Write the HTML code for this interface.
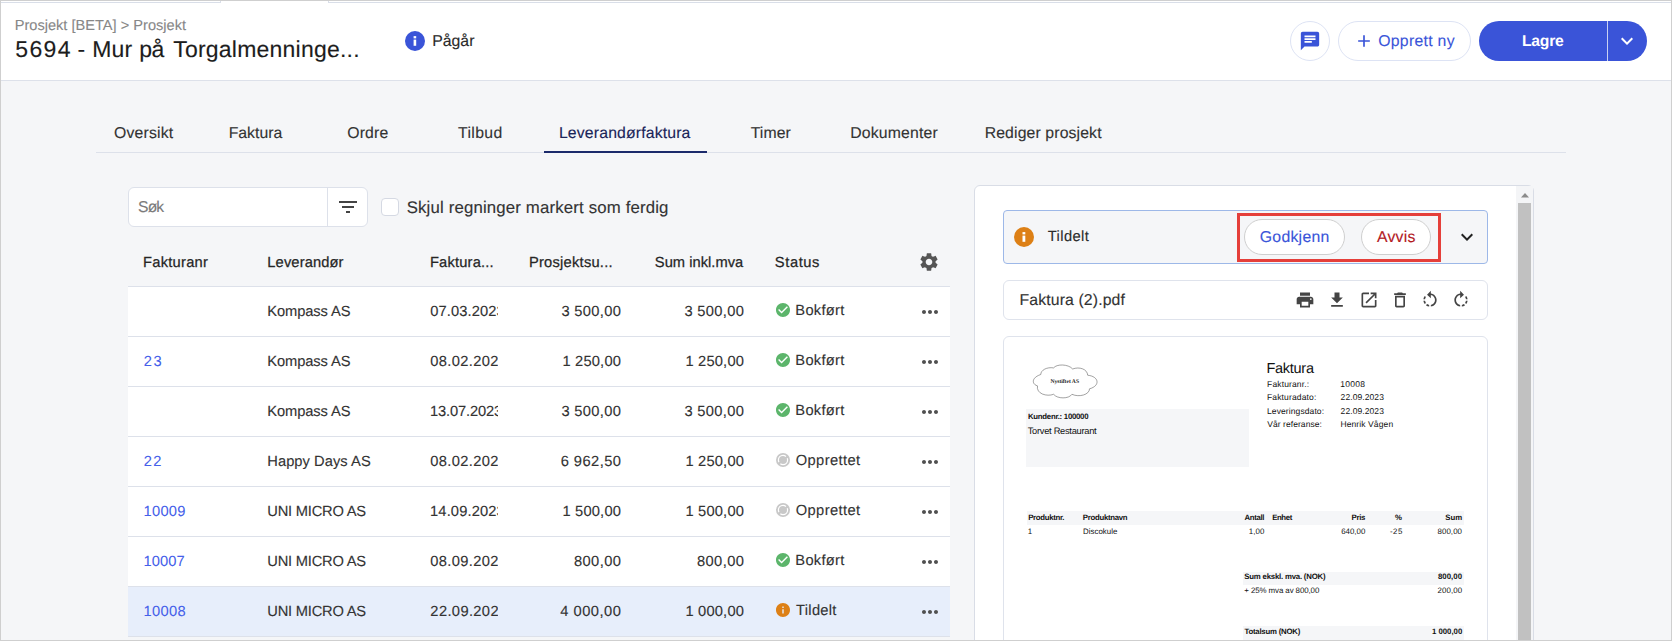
<!DOCTYPE html>
<html lang="nb"><head><meta charset="utf-8"><title>Prosjekt</title>
<style>
*{box-sizing:border-box;margin:0;padding:0}
html,body{width:1672px;height:641px;overflow:hidden;background:#f5f6f8}
body{position:relative;font-family:"Liberation Sans",sans-serif}
.a{position:absolute}
.t{position:absolute;white-space:nowrap;display:block;text-rendering:geometricPrecision}
svg{position:absolute;display:block;overflow:visible}
.hdr{left:0;top:0;width:1672px;height:81px;background:#fff;border-bottom:1px solid #dde1ea}
.frame{left:0;top:0;width:1672px;height:641px;border:1px solid #cfcfcf;z-index:50;pointer-events:none}
.ln{background:#d9dee8}
.pill{border:1px solid #dde3f4;background:#fff;border-radius:21px}
.row{left:128px;width:822px;height:50px;background:#fff;border-bottom:1px solid #dde1ea}
.panel{left:974px;top:185px;width:560px;height:470px;background:#fff;border:1px solid #d9dde6;border-radius:6px}
.band{background:#f5f6f8}

</style></head><body>
<div class="a hdr"></div>
<!-- top tab-strip remnants -->
<div class="a ln" style="left:1px;top:2px;width:220px;height:1px"></div>
<div class="a ln" style="left:220px;top:1px;width:1px;height:2px"></div>
<div class="a ln" style="left:328px;top:1px;width:1px;height:2px"></div>
<div class="a ln" style="left:328px;top:2px;width:1343px;height:1px"></div>

<!-- status: Pågår -->
<svg style="left:405px;top:31px" width="20" height="20" viewBox="0 0 20 20"><circle cx="10" cy="10" r="10" fill="#3a54d8"/><rect x="8.600" y="8.600" width="2.600" height="6.200" fill="#fff"/><rect x="8.600" y="5.100" width="2.600" height="2.300" fill="#fff"/></svg>

<!-- header buttons -->
<div class="a pill" style="left:1290px;top:21px;width:40px;height:40px;border-radius:20px"></div>
<svg style="left:1299px;top:30px" width="22" height="22" viewBox="0 0 24 24"><path fill="#3a54d8" d="M20 2H4c-1.1 0-1.99.9-1.99 2L2 22l4-4h14c1.1 0 2-.9 2-2V4c0-1.1-.9-2-2-2zM6 9h12v2H6V9zm8 5H6v-2h8v2zm4-6H6V6h12v2z"/></svg>
<div class="a pill" style="left:1338px;top:21px;width:133px;height:40px"></div>
<svg style="left:1354px;top:31px" width="20" height="20" viewBox="0 0 24 24"><path fill="#3a54d8" d="M19 13h-6v6h-2v-6H5v-2h6V5h2v6h6v2z"/></svg>
<div class="a" style="left:1479px;top:21px;width:168px;height:40px;border-radius:20px;background:#3a54d8"></div>
<div class="a" style="left:1607px;top:21px;width:1px;height:40px;background:#c9d1f3"></div>
<svg style="left:1615px;top:29px" width="24" height="24" viewBox="0 0 24 24"><path fill="#fff" d="M16.59 8.59L12 13.17 7.41 8.59 6 10l6 6 6-6z"/></svg>

<!-- tabs -->
<div class="a" style="left:96px;top:152px;width:1470px;height:1px;background:#dde1ea"></div>
<div class="a" style="left:544px;top:150.5px;width:163px;height:2.5px;background:#1b2a6b"></div>

<!-- search -->
<div class="a" style="left:128px;top:187px;width:240px;height:40px;background:#fff;border:1px solid #dde1ea;border-radius:6px"></div>
<div class="a" style="left:327px;top:188px;width:1px;height:38px;background:#dde1ea"></div>
<svg style="left:336px;top:195px" width="24" height="24" viewBox="0 0 24 24"><path fill="#444" d="M10 18h4v-2h-4v2zM3 6v2h18V6H3zm3 7h12v-2H6v2z"/></svg>
<div class="a" style="left:381px;top:198px;width:18px;height:18px;background:#fff;border:1px solid #d5d9e3;border-radius:4px"></div>

<!-- table -->
<div class="a" style="left:128px;top:286px;width:822px;height:1px;background:#dde1ea"></div>
<div class="a row" style="top:287px"></div>
<div class="a row" style="top:337px"></div>
<div class="a row" style="top:387px"></div>
<div class="a row" style="top:437px"></div>
<div class="a row" style="top:487px"></div>
<div class="a row" style="top:537px"></div>
<div class="a row" style="top:587px;background:#e7eefb"></div>
<svg style="left:918px;top:251px" width="22" height="22" viewBox="0 0 24 24"><path fill="#555" d="M19.14 12.94c.04-.3.06-.61.06-.94 0-.32-.02-.64-.07-.94l2.03-1.58c.18-.14.23-.41.12-.61l-1.920-3.320c-.12-.22-.37-.29-.59-.22l-2.39.96c-.5-.38-1.030-.7-1.620-.94l-.36-2.540c-.04-.24-.24-.41-.48-.41h-3.840c-.24 0-.43.17-.47.41l-.36 2.540c-.59.24-1.130.57-1.620.94l-2.390-.96c-.22-.08-.47 0-.59.22L2.740 8.870c-.12.21-.08.47.12.61l2.030 1.580c-.05.3-.09.63-.09.94s.02.64.07.94l-2.030 1.580c-.18.14-.23.41-.12.61l1.920 3.320c.12.22.37.29.59.22l2.390-.96c.5.38 1.030.7 1.620.94l.36 2.540c.05.24.24.41.48.41h3.840c.24 0 .44-.17.47-.41l.36-2.540c.59-.24 1.130-.56 1.620-.94l2.390.96c.22.08.47 0 .59-.22l1.920-3.320c.12-.22.07-.47-.12-.61l-2.010-1.580zM12 15.600c-1.980 0-3.600-1.620-3.600-3.600s1.620-3.600 3.600-3.600 3.600 1.620 3.600 3.600-1.620 3.600-3.600 3.600z"/></svg>
<svg style="left:776px;top:303px" width="14" height="14" viewBox="2 2 20 20"><path fill="#5cb56b" d="M12 2C6.480 2 2 6.480 2 12s4.480 10 10 10 10-4.480 10-10S17.520 2 12 2zm-2 15l-5-5 1.410-1.410L10 14.170l7.590-7.590L19 8l-9 9z"/></svg>
<svg style="left:918px;top:300px" width="24" height="24" viewBox="0 0 24 24"><path fill="#505050" d="M6 10c-1.100 0-2 .9-2 2s.9 2 2 2 2-.9 2-2-.9-2-2-2zm12 0c-1.100 0-2 .9-2 2s.9 2 2 2 2-.9 2-2-.9-2-2-2zm-6 0c-1.100 0-2 .9-2 2s.9 2 2 2 2-.9 2-2-.9-2-2-2z"/></svg>
<svg style="left:776px;top:353px" width="14" height="14" viewBox="2 2 20 20"><path fill="#5cb56b" d="M12 2C6.480 2 2 6.480 2 12s4.480 10 10 10 10-4.480 10-10S17.520 2 12 2zm-2 15l-5-5 1.410-1.410L10 14.170l7.590-7.590L19 8l-9 9z"/></svg>
<svg style="left:918px;top:350px" width="24" height="24" viewBox="0 0 24 24"><path fill="#505050" d="M6 10c-1.100 0-2 .9-2 2s.9 2 2 2 2-.9 2-2-.9-2-2-2zm12 0c-1.100 0-2 .9-2 2s.9 2 2 2 2-.9 2-2-.9-2-2-2zm-6 0c-1.100 0-2 .9-2 2s.9 2 2 2 2-.9 2-2-.9-2-2-2z"/></svg>
<svg style="left:776px;top:403px" width="14" height="14" viewBox="2 2 20 20"><path fill="#5cb56b" d="M12 2C6.480 2 2 6.480 2 12s4.480 10 10 10 10-4.480 10-10S17.520 2 12 2zm-2 15l-5-5 1.410-1.410L10 14.170l7.590-7.590L19 8l-9 9z"/></svg>
<svg style="left:918px;top:400px" width="24" height="24" viewBox="0 0 24 24"><path fill="#505050" d="M6 10c-1.100 0-2 .9-2 2s.9 2 2 2 2-.9 2-2-.9-2-2-2zm12 0c-1.100 0-2 .9-2 2s.9 2 2 2 2-.9 2-2-.9-2-2-2zm-6 0c-1.100 0-2 .9-2 2s.9 2 2 2 2-.9 2-2-.9-2-2-2z"/></svg>
<svg style="left:776px;top:453px" width="14" height="14" viewBox="0 0 14 14"><circle cx="7" cy="7" r="7" fill="#c8c8c8"/><circle cx="7" cy="7" r="4.600" fill="none" stroke="#fff" stroke-width="1.200" stroke-dasharray="12.450 2" stroke-dashoffset="2.600"/></svg>
<svg style="left:918px;top:450px" width="24" height="24" viewBox="0 0 24 24"><path fill="#505050" d="M6 10c-1.100 0-2 .9-2 2s.9 2 2 2 2-.9 2-2-.9-2-2-2zm12 0c-1.100 0-2 .9-2 2s.9 2 2 2 2-.9 2-2-.9-2-2-2zm-6 0c-1.100 0-2 .9-2 2s.9 2 2 2 2-.9 2-2-.9-2-2-2z"/></svg>
<svg style="left:776px;top:503px" width="14" height="14" viewBox="0 0 14 14"><circle cx="7" cy="7" r="7" fill="#c8c8c8"/><circle cx="7" cy="7" r="4.600" fill="none" stroke="#fff" stroke-width="1.200" stroke-dasharray="12.450 2" stroke-dashoffset="2.600"/></svg>
<svg style="left:918px;top:500px" width="24" height="24" viewBox="0 0 24 24"><path fill="#505050" d="M6 10c-1.100 0-2 .9-2 2s.9 2 2 2 2-.9 2-2-.9-2-2-2zm12 0c-1.100 0-2 .9-2 2s.9 2 2 2 2-.9 2-2-.9-2-2-2zm-6 0c-1.100 0-2 .9-2 2s.9 2 2 2 2-.9 2-2-.9-2-2-2z"/></svg>
<svg style="left:776px;top:553px" width="14" height="14" viewBox="2 2 20 20"><path fill="#5cb56b" d="M12 2C6.480 2 2 6.480 2 12s4.480 10 10 10 10-4.480 10-10S17.520 2 12 2zm-2 15l-5-5 1.410-1.410L10 14.170l7.590-7.590L19 8l-9 9z"/></svg>
<svg style="left:918px;top:550px" width="24" height="24" viewBox="0 0 24 24"><path fill="#505050" d="M6 10c-1.100 0-2 .9-2 2s.9 2 2 2 2-.9 2-2-.9-2-2-2zm12 0c-1.100 0-2 .9-2 2s.9 2 2 2 2-.9 2-2-.9-2-2-2zm-6 0c-1.100 0-2 .9-2 2s.9 2 2 2 2-.9 2-2-.9-2-2-2z"/></svg>
<svg style="left:776px;top:603px" width="14" height="14" viewBox="2 2 20 20"><path fill="#dd8016" d="M12 2C6.480 2 2 6.480 2 12s4.480 10 10 10 10-4.480 10-10S17.520 2 12 2zm1 15h-2v-6h2v6zm0-8h-2V7h2v2z"/></svg>
<svg style="left:918px;top:600px" width="24" height="24" viewBox="0 0 24 24"><path fill="#505050" d="M6 10c-1.100 0-2 .9-2 2s.9 2 2 2 2-.9 2-2-.9-2-2-2zm12 0c-1.100 0-2 .9-2 2s.9 2 2 2 2-.9 2-2-.9-2-2-2zm-6 0c-1.100 0-2 .9-2 2s.9 2 2 2 2-.9 2-2-.9-2-2-2z"/></svg>

<!-- right panel -->
<div class="a panel"></div>
<!-- scrollbar -->
<div class="a" style="left:1516px;top:186px;width:17px;height:455px;background:#f4f5f7"></div>
<div class="a" style="left:1518px;top:203px;width:13px;height:438px;background:#c1c1c1"></div>
<svg style="left:1520.5px;top:192.5px" width="8" height="4.5" viewBox="0 0 8 4.5"><path fill="#8b8b8b" d="M0 4.500L4 0l4 4.500z"/></svg>

<!-- status bar -->
<div class="a" style="left:1003px;top:210px;width:485px;height:54px;background:#f5f6f8;border:1px solid #9db8e8;border-radius:4px"></div>
<svg style="left:1014px;top:227px" width="20" height="20" viewBox="0 0 20 20"><circle cx="10" cy="10" r="10" fill="#dd8016"/><rect x="8.500" y="8.600" width="2.800" height="6.200" fill="#fff"/><rect x="8.500" y="5.100" width="2.800" height="2.300" fill="#fff"/></svg>
<div class="a" style="left:1237px;top:213px;width:204px;height:49px;border:3px solid #e53f3a"></div>
<div class="a" style="left:1244px;top:219px;width:101px;height:36px;border:1px solid #cfcfcf;border-radius:18px;background:#fff"></div>
<div class="a" style="left:1361px;top:219px;width:70px;height:36px;border:1px solid #cfcfcf;border-radius:18px;background:#fff"></div>
<svg style="left:1455px;top:225.400px" width="24" height="24" viewBox="0 0 24 24"><path fill="#222" d="M16.590 8.590L12 13.170 7.410 8.590 6 10l6 6 6-6z"/></svg>

<!-- file bar -->
<div class="a" style="left:1003px;top:280px;width:485px;height:40px;background:#fff;border:1px solid #dfe3ec;border-radius:6px"></div>
<svg style="left:1295px;top:290px" width="20" height="20" viewBox="0 0 24 24"><path fill="#444" d="M19 8H5c-1.660 0-3 1.340-3 3v6h4v4h12v-4h4v-6c0-1.660-1.340-3-3-3zm-3 11H8v-5h8v5zm3-7c-.55 0-1-.45-1-1s.45-1 1-1 1 .45 1 1-.45 1-1 1zm-1-9H6v4h12V3z"/></svg>
<svg style="left:1327px;top:290px" width="20" height="20" viewBox="0 0 24 24"><path fill="#444" d="M19 9h-4V3H9v6H5l7 7 7-7zM5 18v2h14v-2H5z"/></svg>
<svg style="left:1358.500px;top:290px" width="20" height="20" viewBox="0 0 24 24"><path fill="#444" d="M19 19H5V5h7V3H5c-1.110 0-2 .9-2 2v14c0 1.100.89 2 2 2h14c1.100 0 2-.9 2-2v-7h-2v7zM14 3v2h3.590l-9.830 9.830 1.410 1.410L19 6.410V10h2V3h-7z"/></svg>
<svg style="left:1389.700px;top:290px" width="20" height="20" viewBox="0 0 24 24"><path fill="#444" d="M6 19c0 1.100.9 2 2 2h8c1.100 0 2-.9 2-2V7H6v12zM8 9h8v10H8V9zm7.500-5l-1-1h-5l-1 1H5v2h14V4z"/></svg>
<svg style="left:1420.400px;top:290px" width="20" height="20" viewBox="0 0 24 24"><path fill="#444" d="M7.110 8.530L5.700 7.110C4.800 8.270 4.240 9.610 4.070 11h2.020c.14-.87.49-1.720 1.020-2.470zM6.090 13H4.070c.17 1.390.72 2.730 1.620 3.890l1.410-1.420c-.52-.75-.87-1.590-1.010-2.470zm1.010 5.320c1.160.9 2.510 1.440 3.900 1.610V17.900c-.87-.15-1.710-.49-2.460-1.030L7.100 18.320zM13 4.070V1L8.450 5.550 13 10V6.090c2.840.48 5 2.940 5 5.910s-2.160 5.430-5 5.910v2.020c3.950-.49 7-3.850 7-7.930s-3.050-7.440-7-7.930z"/></svg>
<svg style="left:1451.300px;top:290px" width="20" height="20" viewBox="0 0 24 24"><path fill="#444" d="M15.550 5.550L11 1v3.070C7.060 4.560 4 7.920 4 12s3.050 7.440 7 7.930v-2.020c-2.840-.48-5-2.940-5-5.910s2.160-5.430 5-5.910V10l4.550-4.450zM19.930 11c-.17-1.390-.72-2.730-1.620-3.890l-1.420 1.420c.54.75.88 1.600 1.020 2.470h2.020zM13 17.900v2.020c1.390-.17 2.740-.71 3.900-1.610l-1.440-1.440c-.75.54-1.590.89-2.460 1.030zm3.890-2.420l1.420 1.410c.9-1.160 1.450-2.500 1.620-3.890h-2.020c-.14.870-.48 1.720-1.020 2.480z"/></svg>

<!-- pdf preview -->
<div class="a" style="left:1003px;top:336px;width:485px;height:320px;background:#fff;border:1px solid #dfe3ec;border-radius:6px"></div>
<div class="a band" style="left:1025.700px;top:409px;width:223.500px;height:58px"></div>
<div class="a band" style="left:1027px;top:511px;width:437px;height:14px"></div>
<div class="a band" style="left:1243.400px;top:572px;width:220.600px;height:13px"></div>
<div class="a band" style="left:1243.400px;top:625.500px;width:220.600px;height:14px"></div>
<svg style="left:1025px;top:358px" width="80" height="47" viewBox="0 0 1091 641"><path fill="#fff" stroke="#4a4a4a" stroke-width="7" d="M170 380C95 360 80 270 215 225 215 165 300 120 390 135 430 80 590 80 650 150 740 115 850 150 855 235 1010 250 1030 380 880 420 880 500 740 540 640 495 600 560 440 560 390 495 300 530 150 490 170 380z"/></svg>
<div class="a frame"></div>

<span class="t" style="font:400 14.6px/1 'Liberation Sans', sans-serif;color:#878787;top:19.20px;letter-spacing:0.006px;left:14.66px;-webkit-text-stroke:0.1px #878787;">Prosjekt [BETA] &gt; Prosjekt</span>
<span class="t" style="font:400 23px/1 'Liberation Sans', sans-serif;color:#1c1c1c;top:38.20px;letter-spacing:1.447px;left:15.15px;-webkit-text-stroke:0.13px #1c1c1c;">5694</span>
<span class="t" style="font:400 23px/1 'Liberation Sans', sans-serif;color:#1c1c1c;top:38.20px;left:77.42px;-webkit-text-stroke:0.13px #1c1c1c;">-</span>
<span class="t" style="font:400 23px/1 'Liberation Sans', sans-serif;color:#1c1c1c;top:38.20px;letter-spacing:0.218px;left:92.22px;-webkit-text-stroke:0.13px #1c1c1c;">Mur</span>
<span class="t" style="font:400 23px/1 'Liberation Sans', sans-serif;color:#1c1c1c;top:38.20px;letter-spacing:-0.541px;left:139.34px;-webkit-text-stroke:0.13px #1c1c1c;">på</span>
<span class="t" style="font:400 23px/1 'Liberation Sans', sans-serif;color:#1c1c1c;top:38.20px;letter-spacing:0.216px;left:173.25px;-webkit-text-stroke:0.13px #1c1c1c;">Torgalmenninge...</span>
<span class="t" style="font:400 15.8px/1 'Liberation Sans', sans-serif;color:#2b2b2b;top:34.20px;letter-spacing:0.026px;left:432.19px;-webkit-text-stroke:0.13px #2b2b2b;">Pågår</span>
<span class="t" style="font:400 15.8px/1 'Liberation Sans', sans-serif;color:#3a55d9;top:34.20px;letter-spacing:0.291px;left:1378.18px;-webkit-text-stroke:0.1px #3a55d9;">Opprett ny</span>
<span class="t" style="font:700 15.7px/1 'Liberation Sans', sans-serif;color:#ffffff;top:34.20px;letter-spacing:-0.213px;left:1521.97px;">Lagre</span>
<span class="t" style="font:400 15.8px/1 'Liberation Sans', sans-serif;color:#333333;top:126.20px;letter-spacing:0.162px;left:114.10px;-webkit-text-stroke:0.13px #333333;">Oversikt</span>
<span class="t" style="font:400 15.8px/1 'Liberation Sans', sans-serif;color:#333333;top:126.20px;letter-spacing:0.029px;left:228.63px;-webkit-text-stroke:0.13px #333333;">Faktura</span>
<span class="t" style="font:400 15.8px/1 'Liberation Sans', sans-serif;color:#333333;top:126.20px;letter-spacing:0.126px;left:347.30px;-webkit-text-stroke:0.13px #333333;">Ordre</span>
<span class="t" style="font:400 15.8px/1 'Liberation Sans', sans-serif;color:#333333;top:126.20px;letter-spacing:0.359px;left:458.07px;-webkit-text-stroke:0.13px #333333;">Tilbud</span>
<span class="t" style="font:400 15.8px/1 'Liberation Sans', sans-serif;color:#333333;top:126.20px;letter-spacing:0.061px;left:750.72px;-webkit-text-stroke:0.13px #333333;">Timer</span>
<span class="t" style="font:400 15.8px/1 'Liberation Sans', sans-serif;color:#333333;top:126.20px;letter-spacing:0.159px;left:850.19px;-webkit-text-stroke:0.13px #333333;">Dokumenter</span>
<span class="t" style="font:400 15.8px/1 'Liberation Sans', sans-serif;color:#333333;top:126.20px;letter-spacing:0.123px;left:984.67px;-webkit-text-stroke:0.13px #333333;">Rediger prosjekt</span>
<span class="t" style="font:400 15.8px/1 'Liberation Sans', sans-serif;color:#1b2559;top:126.20px;letter-spacing:0.148px;left:558.94px;-webkit-text-stroke:0.13px #1b2559;">Leverandørfaktura</span>
<span class="t" style="font:400 15.7px/1 'Liberation Sans', sans-serif;color:#7a7a7a;top:200.20px;letter-spacing:-0.876px;left:138.07px;-webkit-text-stroke:0.13px #7a7a7a;">Søk</span>
<span class="t" style="font:400 16.8px/1 'Liberation Sans', sans-serif;color:#333333;top:200.20px;letter-spacing:0.161px;left:406.66px;-webkit-text-stroke:0.13px #333333;">Skjul regninger markert som ferdig</span>
<span class="t" style="font:400 14.7px/1 'Liberation Sans', sans-serif;color:#262626;top:256.20px;letter-spacing:0.265px;left:142.98px;-webkit-text-stroke:0.25px #262626;">Fakturanr</span>
<span class="t" style="font:400 14.7px/1 'Liberation Sans', sans-serif;color:#262626;top:256.20px;letter-spacing:0.122px;left:267.31px;-webkit-text-stroke:0.25px #262626;">Leverandør</span>
<span class="t" style="font:400 14.7px/1 'Liberation Sans', sans-serif;color:#262626;top:256.20px;letter-spacing:0.181px;left:429.98px;-webkit-text-stroke:0.25px #262626;">Faktura...</span>
<span class="t" style="font:400 14.7px/1 'Liberation Sans', sans-serif;color:#262626;top:256.20px;letter-spacing:0.232px;left:528.98px;-webkit-text-stroke:0.25px #262626;">Prosjektsu...</span>
<span class="t" style="font:400 14.7px/1 'Liberation Sans', sans-serif;color:#262626;top:256.20px;letter-spacing:0.021px;left:654.87px;-webkit-text-stroke:0.25px #262626;">Sum inkl.mva</span>
<span class="t" style="font:400 14.7px/1 'Liberation Sans', sans-serif;color:#262626;top:256.20px;letter-spacing:0.583px;left:774.87px;-webkit-text-stroke:0.25px #262626;">Status</span>
<span class="t" style="font:400 14.7px/1 'Liberation Sans', sans-serif;color:#333333;top:305.20px;letter-spacing:-0.103px;left:267.30px;-webkit-text-stroke:0.13px #333333;">Kompass AS</span>
<span class="t" style="font:400 14.7px/1 'Liberation Sans', sans-serif;color:#333333;top:305.20px;letter-spacing:0.107px;left:430.28px;-webkit-text-stroke:0.13px #333333;width:67.72px;overflow:hidden;">07.03.2023</span>
<span class="t" style="font:400 14.7px/1 'Liberation Sans', sans-serif;color:#333333;top:305.20px;letter-spacing:0.329px;right:1050.75px;-webkit-text-stroke:0.13px #333333;">3 500,00</span>
<span class="t" style="font:400 14.7px/1 'Liberation Sans', sans-serif;color:#333333;top:305.20px;letter-spacing:0.329px;right:927.75px;-webkit-text-stroke:0.13px #333333;">3 500,00</span>
<span class="t" style="font:400 14.7px/1 'Liberation Sans', sans-serif;color:#333333;top:304.20px;letter-spacing:0.282px;left:795.30px;-webkit-text-stroke:0.13px #333333;">Bokført</span>
<span class="t" style="font:400 14.7px/1 'Liberation Sans', sans-serif;color:#4560ea;top:355.20px;letter-spacing:1.686px;left:143.74px;-webkit-text-stroke:0.05px #4560ea;">23</span>
<span class="t" style="font:400 14.7px/1 'Liberation Sans', sans-serif;color:#333333;top:355.20px;letter-spacing:-0.103px;left:267.30px;-webkit-text-stroke:0.13px #333333;">Kompass AS</span>
<span class="t" style="font:400 14.7px/1 'Liberation Sans', sans-serif;color:#333333;top:355.20px;letter-spacing:0.366px;left:430.28px;-webkit-text-stroke:0.13px #333333;width:67.72px;overflow:hidden;">08.02.2023</span>
<span class="t" style="font:400 14.7px/1 'Liberation Sans', sans-serif;color:#333333;top:355.20px;letter-spacing:0.196px;right:1050.88px;-webkit-text-stroke:0.13px #333333;">1 250,00</span>
<span class="t" style="font:400 14.7px/1 'Liberation Sans', sans-serif;color:#333333;top:355.20px;letter-spacing:0.196px;right:927.88px;-webkit-text-stroke:0.13px #333333;">1 250,00</span>
<span class="t" style="font:400 14.7px/1 'Liberation Sans', sans-serif;color:#333333;top:354.20px;letter-spacing:0.282px;left:795.30px;-webkit-text-stroke:0.13px #333333;">Bokført</span>
<span class="t" style="font:400 14.7px/1 'Liberation Sans', sans-serif;color:#333333;top:405.20px;letter-spacing:-0.103px;left:267.30px;-webkit-text-stroke:0.13px #333333;">Kompass AS</span>
<span class="t" style="font:400 14.7px/1 'Liberation Sans', sans-serif;color:#333333;top:405.20px;letter-spacing:-0.163px;left:430.05px;-webkit-text-stroke:0.13px #333333;width:67.95px;overflow:hidden;">13.07.2023</span>
<span class="t" style="font:400 14.7px/1 'Liberation Sans', sans-serif;color:#333333;top:405.20px;letter-spacing:0.329px;right:1050.75px;-webkit-text-stroke:0.13px #333333;">3 500,00</span>
<span class="t" style="font:400 14.7px/1 'Liberation Sans', sans-serif;color:#333333;top:405.20px;letter-spacing:0.329px;right:927.75px;-webkit-text-stroke:0.13px #333333;">3 500,00</span>
<span class="t" style="font:400 14.7px/1 'Liberation Sans', sans-serif;color:#333333;top:404.20px;letter-spacing:0.282px;left:795.30px;-webkit-text-stroke:0.13px #333333;">Bokført</span>
<span class="t" style="font:400 14.7px/1 'Liberation Sans', sans-serif;color:#4560ea;top:455.20px;letter-spacing:1.369px;left:143.74px;-webkit-text-stroke:0.05px #4560ea;">22</span>
<span class="t" style="font:400 14.7px/1 'Liberation Sans', sans-serif;color:#333333;top:455.20px;letter-spacing:0.044px;left:267.30px;-webkit-text-stroke:0.13px #333333;">Happy Days AS</span>
<span class="t" style="font:400 14.7px/1 'Liberation Sans', sans-serif;color:#333333;top:455.20px;letter-spacing:0.366px;left:430.28px;-webkit-text-stroke:0.13px #333333;width:67.72px;overflow:hidden;">08.02.2023</span>
<span class="t" style="font:400 14.7px/1 'Liberation Sans', sans-serif;color:#333333;top:455.20px;letter-spacing:0.428px;right:1050.65px;-webkit-text-stroke:0.13px #333333;">6 962,50</span>
<span class="t" style="font:400 14.7px/1 'Liberation Sans', sans-serif;color:#333333;top:455.20px;letter-spacing:0.196px;right:927.88px;-webkit-text-stroke:0.13px #333333;">1 250,00</span>
<span class="t" style="font:400 14.7px/1 'Liberation Sans', sans-serif;color:#333333;top:454.20px;letter-spacing:0.383px;left:795.77px;-webkit-text-stroke:0.13px #333333;">Opprettet</span>
<span class="t" style="font:400 14.7px/1 'Liberation Sans', sans-serif;color:#4560ea;top:505.20px;letter-spacing:0.317px;left:143.41px;-webkit-text-stroke:0.05px #4560ea;">10009</span>
<span class="t" style="font:400 14.7px/1 'Liberation Sans', sans-serif;color:#333333;top:505.20px;letter-spacing:-0.217px;left:267.30px;-webkit-text-stroke:0.13px #333333;">UNI MICRO AS</span>
<span class="t" style="font:400 14.7px/1 'Liberation Sans', sans-serif;color:#333333;top:505.20px;letter-spacing:0.133px;left:430.05px;-webkit-text-stroke:0.13px #333333;width:67.95px;overflow:hidden;">14.09.2023</span>
<span class="t" style="font:400 14.7px/1 'Liberation Sans', sans-serif;color:#333333;top:505.20px;letter-spacing:0.196px;right:1050.88px;-webkit-text-stroke:0.13px #333333;">1 500,00</span>
<span class="t" style="font:400 14.7px/1 'Liberation Sans', sans-serif;color:#333333;top:505.20px;letter-spacing:0.196px;right:927.88px;-webkit-text-stroke:0.13px #333333;">1 500,00</span>
<span class="t" style="font:400 14.7px/1 'Liberation Sans', sans-serif;color:#333333;top:504.20px;letter-spacing:0.383px;left:795.77px;-webkit-text-stroke:0.13px #333333;">Opprettet</span>
<span class="t" style="font:400 14.7px/1 'Liberation Sans', sans-serif;color:#4560ea;top:555.20px;letter-spacing:0.128px;left:143.41px;-webkit-text-stroke:0.05px #4560ea;">10007</span>
<span class="t" style="font:400 14.7px/1 'Liberation Sans', sans-serif;color:#333333;top:555.20px;letter-spacing:-0.217px;left:267.30px;-webkit-text-stroke:0.13px #333333;">UNI MICRO AS</span>
<span class="t" style="font:400 14.7px/1 'Liberation Sans', sans-serif;color:#333333;top:555.20px;letter-spacing:0.366px;left:430.28px;-webkit-text-stroke:0.13px #333333;width:67.72px;overflow:hidden;">08.09.2023</span>
<span class="t" style="font:400 14.7px/1 'Liberation Sans', sans-serif;color:#333333;top:555.20px;letter-spacing:0.421px;right:1050.66px;-webkit-text-stroke:0.13px #333333;">800,00</span>
<span class="t" style="font:400 14.7px/1 'Liberation Sans', sans-serif;color:#333333;top:555.20px;letter-spacing:0.421px;right:927.66px;-webkit-text-stroke:0.13px #333333;">800,00</span>
<span class="t" style="font:400 14.7px/1 'Liberation Sans', sans-serif;color:#333333;top:554.20px;letter-spacing:0.282px;left:795.30px;-webkit-text-stroke:0.13px #333333;">Bokført</span>
<span class="t" style="font:400 14.7px/1 'Liberation Sans', sans-serif;color:#4560ea;top:605.20px;letter-spacing:0.338px;left:143.41px;-webkit-text-stroke:0.05px #4560ea;">10008</span>
<span class="t" style="font:400 14.7px/1 'Liberation Sans', sans-serif;color:#333333;top:605.20px;letter-spacing:-0.217px;left:267.30px;-webkit-text-stroke:0.13px #333333;">UNI MICRO AS</span>
<span class="t" style="font:400 14.7px/1 'Liberation Sans', sans-serif;color:#333333;top:605.20px;letter-spacing:0.358px;left:430.36px;-webkit-text-stroke:0.13px #333333;width:67.64px;overflow:hidden;">22.09.2023</span>
<span class="t" style="font:400 14.7px/1 'Liberation Sans', sans-serif;color:#333333;top:605.20px;letter-spacing:0.493px;right:1050.59px;-webkit-text-stroke:0.13px #333333;">4 000,00</span>
<span class="t" style="font:400 14.7px/1 'Liberation Sans', sans-serif;color:#333333;top:605.20px;letter-spacing:0.196px;right:927.88px;-webkit-text-stroke:0.13px #333333;">1 000,00</span>
<span class="t" style="font:400 14.7px/1 'Liberation Sans', sans-serif;color:#333333;top:604.20px;letter-spacing:0.286px;left:796.08px;-webkit-text-stroke:0.13px #333333;">Tildelt</span>
<span class="t" style="font:400 14.7px/1 'Liberation Sans', sans-serif;color:#2b2b2b;top:230.20px;letter-spacing:0.388px;left:1047.77px;-webkit-text-stroke:0.13px #2b2b2b;">Tildelt</span>
<span class="t" style="font:400 15.8px/1 'Liberation Sans', sans-serif;color:#3a55d9;top:230.20px;letter-spacing:0.272px;left:1259.78px;-webkit-text-stroke:0.13px #3a55d9;">Godkjenn</span>
<span class="t" style="font:400 15.8px/1 'Liberation Sans', sans-serif;color:#b3181e;top:230.20px;letter-spacing:0.226px;left:1376.95px;-webkit-text-stroke:0.13px #b3181e;">Avvis</span>
<span class="t" style="font:400 15.8px/1 'Liberation Sans', sans-serif;color:#333333;top:293.20px;letter-spacing:0.119px;left:1019.59px;-webkit-text-stroke:0.13px #333333;">Faktura (2).pdf</span>
<span class="t" style="font:700 5.6px/1 'Liberation Serif', serif;color:#222;top:380.20px;letter-spacing:-0.016px;left:1050.43px;">Nystiftet AS</span>
<span class="t" style="font:700 7.8px/1 'Liberation Sans', sans-serif;color:#111111;top:413.40px;letter-spacing:-0.273px;left:1028.01px;">Kundenr.: 100000</span>
<span class="t" style="font:400 9.3px/1 'Liberation Sans', sans-serif;color:#111111;top:426.90px;letter-spacing:-0.281px;left:1027.73px;">Torvet Restaurant</span>
<span class="t" style="font:400 14.5px/1 'Liberation Sans', sans-serif;color:#111111;top:361.50px;letter-spacing:-0.273px;left:1266.44px;">Faktura</span>
<span class="t" style="font:400 8.5px/1 'Liberation Sans', sans-serif;color:#111111;top:379.50px;letter-spacing:0.140px;left:1267.05px;">Fakturanr.:</span>
<span class="t" style="font:400 8.5px/1 'Liberation Sans', sans-serif;color:#111111;top:379.50px;letter-spacing:0.266px;left:1340.20px;">10008</span>
<span class="t" style="font:400 8.5px/1 'Liberation Sans', sans-serif;color:#111111;top:393.07px;letter-spacing:0.135px;left:1267.05px;">Fakturadato:</span>
<span class="t" style="font:400 8.5px/1 'Liberation Sans', sans-serif;color:#111111;top:393.07px;letter-spacing:0.086px;left:1340.59px;">22.09.2023</span>
<span class="t" style="font:400 8.5px/1 'Liberation Sans', sans-serif;color:#111111;top:406.64px;letter-spacing:0.100px;left:1267.01px;">Leveringsdato:</span>
<span class="t" style="font:400 8.5px/1 'Liberation Sans', sans-serif;color:#111111;top:406.64px;letter-spacing:0.086px;left:1340.59px;">22.09.2023</span>
<span class="t" style="font:400 8.5px/1 'Liberation Sans', sans-serif;color:#111111;top:420.21px;letter-spacing:0.059px;left:1267.28px;">Vår referanse:</span>
<span class="t" style="font:400 8.5px/1 'Liberation Sans', sans-serif;color:#111111;top:420.21px;letter-spacing:0.110px;left:1340.40px;">Henrik Vågen</span>
<span class="t" style="font:700 7.8px/1 'Liberation Sans', sans-serif;color:#111111;top:513.60px;letter-spacing:-0.294px;left:1028.20px;">Produktnr.</span>
<span class="t" style="font:700 7.8px/1 'Liberation Sans', sans-serif;color:#111111;top:513.60px;letter-spacing:-0.297px;left:1082.87px;">Produktnavn</span>
<span class="t" style="font:700 7.8px/1 'Liberation Sans', sans-serif;color:#111111;top:513.60px;letter-spacing:-0.333px;right:407.85px;">Antall</span>
<span class="t" style="font:700 7.8px/1 'Liberation Sans', sans-serif;color:#111111;top:513.60px;letter-spacing:-0.405px;left:1272.21px;">Enhet</span>
<span class="t" style="font:700 7.8px/1 'Liberation Sans', sans-serif;color:#111111;top:513.60px;letter-spacing:-0.273px;right:306.84px;">Pris</span>
<span class="t" style="font:700 7.8px/1 'Liberation Sans', sans-serif;color:#111111;top:513.60px;right:269.99px;">%</span>
<span class="t" style="font:700 7.8px/1 'Liberation Sans', sans-serif;color:#111111;top:513.60px;letter-spacing:0.038px;right:209.66px;">Sum</span>
<span class="t" style="font:400 7.9px/1 'Liberation Sans', sans-serif;color:#111111;top:528.40px;left:1027.87px;">1</span>
<span class="t" style="font:400 7.9px/1 'Liberation Sans', sans-serif;color:#111111;top:528.40px;letter-spacing:0.027px;left:1082.95px;">Discokule</span>
<span class="t" style="font:400 7.9px/1 'Liberation Sans', sans-serif;color:#111111;top:528.40px;letter-spacing:0.086px;right:407.59px;">1,00</span>
<span class="t" style="font:400 7.9px/1 'Liberation Sans', sans-serif;color:#111111;top:528.40px;letter-spacing:0.002px;right:306.67px;">640,00</span>
<span class="t" style="font:400 7.9px/1 'Liberation Sans', sans-serif;color:#111111;top:528.40px;letter-spacing:0.503px;right:269.12px;">-25</span>
<span class="t" style="font:400 7.9px/1 'Liberation Sans', sans-serif;color:#111111;top:528.40px;letter-spacing:0.080px;right:209.91px;">800,00</span>
<span class="t" style="font:700 7.8px/1 'Liberation Sans', sans-serif;color:#111111;top:573.00px;letter-spacing:-0.206px;left:1244.27px;">Sum ekskl. mva. (NOK)</span>
<span class="t" style="font:700 7.8px/1 'Liberation Sans', sans-serif;color:#111111;top:573.00px;letter-spacing:0.059px;right:209.92px;">800,00</span>
<span class="t" style="font:400 7.9px/1 'Liberation Sans', sans-serif;color:#111111;top:586.70px;letter-spacing:-0.089px;left:1244.35px;">+ 25% mva av 800,00</span>
<span class="t" style="font:400 7.9px/1 'Liberation Sans', sans-serif;color:#111111;top:586.70px;letter-spacing:0.074px;right:209.81px;">200,00</span>
<span class="t" style="font:700 7.8px/1 'Liberation Sans', sans-serif;color:#111111;top:628.10px;letter-spacing:-0.226px;left:1244.44px;">Totalsum (NOK)</span>
<span class="t" style="font:700 7.8px/1 'Liberation Sans', sans-serif;color:#111111;top:628.10px;letter-spacing:-0.017px;right:209.77px;">1 000,00</span>
</body></html>
